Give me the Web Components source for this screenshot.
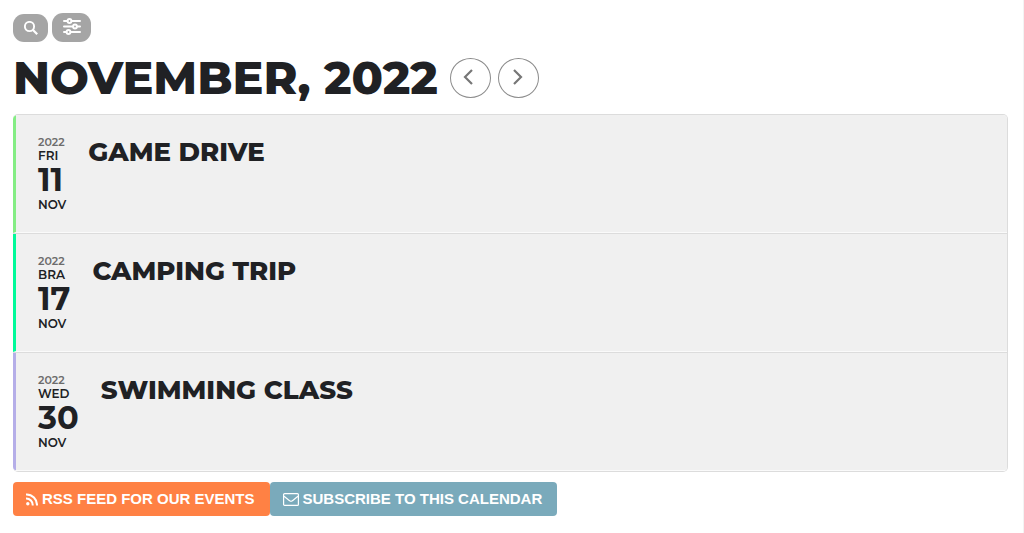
<!DOCTYPE html>
<html lang="en">
<head>
<meta charset="utf-8">
<meta name="viewport" content="width=device-width, initial-scale=1">
<title>Events</title>
<style>
body {
    margin: 0;
    background-color: #fff;
    color: #202124;
    font-family: Montserrat, Inter, "Open Sans", sans-serif;
}
</style>
</head>
<body>
<event-calendar>
  <calendar-tools slot="tools"></calendar-tools>
  <calendar-header slot="header">November, 2022</calendar-header>
  <event-row year="2022" weekday="Fri" day="11" month="Nov" style="--accent: #84ed84">Game Drive</event-row>
  <event-row year="2022" weekday="Bra" day="17" month="Nov" style="--accent: #00fa9a">Camping Trip</event-row>
  <event-row year="2022" weekday="Wed" day="30" month="Nov" style="--accent: #b5aee8">Swimming Class</event-row>
  <feed-link slot="links" href="#rss" style="--background: #ff8144">
    <svg slot="icon" width="12" height="13" viewBox="0 0 12 13" fill="none" stroke="#fff" stroke-width="2"><circle cx="1.8" cy="10.8" r="1.7" fill="#fff" stroke="none"/><path d="M0 5.500a6.500 6.500 0 0 1 6.700 7M0 1.500a10.500 10.500 0 0 1 11 11"/></svg>
    RSS feed for our events
  </feed-link>
  <feed-link slot="links" href="#subscribe" style="--background: #7aaabb">
    <svg slot="icon" width="16" height="13" viewBox="0 0 16 13" fill="none" stroke="#fff" stroke-width="1.2"><rect x=".6" y=".6" width="14.8" height="11.8" rx="1"/><path d="M1 3.2c2 1.8 4 3.2 5.7 4.6q1.300.9 2.600 0C11 6.400 13 5 15 3.200"/></svg>
    Subscribe to this calendar
  </feed-link>
</event-calendar>

<script>
function attach(element, html) {
  const template = document.createElement('template');
  template.innerHTML = html;
  element.attachShadow({ mode: 'open' }).appendChild(template.content.cloneNode(true));
}

class EventCalendar extends HTMLElement {
  connectedCallback() {
    attach(this, `
<style>
:host {
    display: block;
    box-sizing: border-box;
    min-height: 100vh;
    padding: 13px 15px 16px 13px;
    border-right: 1px solid #f3f3f3;
}
.list {
    margin-top: 16px;
    border: 1px solid #dcdcdc;
    border-left: 0;
    border-radius: 5px;
    overflow: hidden;
}
.links {
    display: flex;
    flex-wrap: wrap;
    margin-top: 10px;
}
</style>
<slot name="tools"></slot>
<slot name="header"></slot>
<div class="list"><slot></slot></div>
<div class="links"><slot name="links"></slot></div>
`);
  }
}

class CalendarTools extends HTMLElement {
  connectedCallback() {
    attach(this, `
<style>
:host {
    display: flex;
    align-items: flex-end;
    gap: 4px;
}
button {
    display: flex;
    align-items: center;
    justify-content: center;
    width: 35px;
    height: 28px;
    padding: 0;
    border: 0;
    border-radius: 11px;
    background-color: #a5a5a5;
}
.filter {
    width: 39px;
    height: 29px;
    padding-bottom: 3px;
}
</style>
<button type="button" aria-label="Search">
  <svg width="14" height="14" viewBox="0 0 14 14" fill="none" stroke="#fff" stroke-width="1.900"><circle cx="5.500" cy="5.500" r="4.600"/><path d="M9 9l4.200 4.200" stroke-width="2.200"/></svg>
</button>
<button type="button" class="filter" aria-label="Filter">
  <svg width="18" height="17" viewBox="0 0 18 17" fill="#a5a5a5" stroke="#fff" stroke-width="2" stroke-linecap="round"><path d="M1 3h16M1 8.500h16M1 14h16"/><circle cx="6.500" cy="3" r="1.900"/><circle cx="12" cy="8.500" r="1.900"/><circle cx="5.500" cy="14" r="1.900"/></svg>
</button>
`);
  }
}

class CalendarHeader extends HTMLElement {
  connectedCallback() {
    attach(this, `
<style>
:host {
    display: flex;
    flex-wrap: wrap;
    align-items: center;
    margin-top: 16px;
}
h1 {
    margin: 0 12px 0 0;
    font-size: 46px;
    font-weight: 800;
    line-height: 40px;
    text-transform: uppercase;
}
nav {
    display: flex;
    gap: 7px;
}
button {
    display: flex;
    align-items: center;
    justify-content: center;
    width: 41px;
    height: 40px;
    padding: 0 4px 3px 0;
    border: 1px solid #8c8c8c;
    border-radius: 50%;
    background-color: #fff;
}
button + button {
    padding: 0 0 3px;
}
</style>
<h1><slot></slot></h1>
<nav aria-label="Month">
  <button type="button" aria-label="Previous month"><svg width="10" height="16" viewBox="0 0 10 16" fill="none" stroke="#777" stroke-width="2.200"><path d="M9 1L2 8l7 7"/></svg></button>
  <button type="button" aria-label="Next month"><svg width="10" height="16" viewBox="0 0 10 16" fill="none" stroke="#777" stroke-width="2.200"><path d="M1 1l7 7-7 7"/></svg></button>
</nav>
`);
  }
}

class EventRow extends HTMLElement {
  connectedCallback() {
    attach(this, `
<style>
:host {
    display: block;
    border-bottom: 1px solid #dcdcdc;
}
:host(:last-of-type) {
    border-bottom: 0;
}
.row {
    display: flex;
    align-items: flex-start;
    gap: 22px;
    padding: 21px 20px 21px 22px;
    border-left: 3px solid var(--accent);
    border-bottom: 1px solid #fafafa;
    background-color: #f0f0f0;
    background-clip: padding-box;
    text-transform: uppercase;
}
time {
    display: block;
    font-size: 12px;
    font-weight: 600;
    line-height: 13px;
}
span {
    display: block;
}
.year {
    color: #6c6c6c;
    font-size: 11px;
}
.day {
    font-size: 32px;
    font-weight: 700;
    line-height: 36px;
}
h2 {
    margin: 0;
    font-size: 26px;
    font-weight: 800;
    line-height: 32px;
}
</style>
<div class="row">
  <time>
    <span class="year"></span>
    <span class="weekday"></span>
    <span class="day"></span>
    <span class="month"></span>
  </time>
  <h2><slot></slot></h2>
</div>
`);
    for (const name of ['year', 'weekday', 'day', 'month']) {
      this.shadowRoot.querySelector('.' + name).textContent = this.getAttribute(name);
    }
  }
}

class FeedLink extends HTMLElement {
  connectedCallback() {
    attach(this, `
<style>
:host {
    display: block;
}
a {
    display: flex;
    align-items: center;
    gap: 4px;
    height: 34px;
    padding: 0 15px 0 13px;
    border-radius: 4px;
    background-color: var(--background);
    color: #fff;
    font: bold 15px/34px "Liberation Sans", Arial, sans-serif;
    text-decoration: none;
    text-transform: uppercase;
}
</style>
<a><slot name="icon"></slot><span><slot></slot></span></a>
`);
    this.shadowRoot.querySelector('a').href = this.getAttribute('href');
  }
}

window.customElements.define('event-calendar', EventCalendar);
window.customElements.define('calendar-tools', CalendarTools);
window.customElements.define('calendar-header', CalendarHeader);
window.customElements.define('event-row', EventRow);
window.customElements.define('feed-link', FeedLink);
</script>
</body>
</html>
